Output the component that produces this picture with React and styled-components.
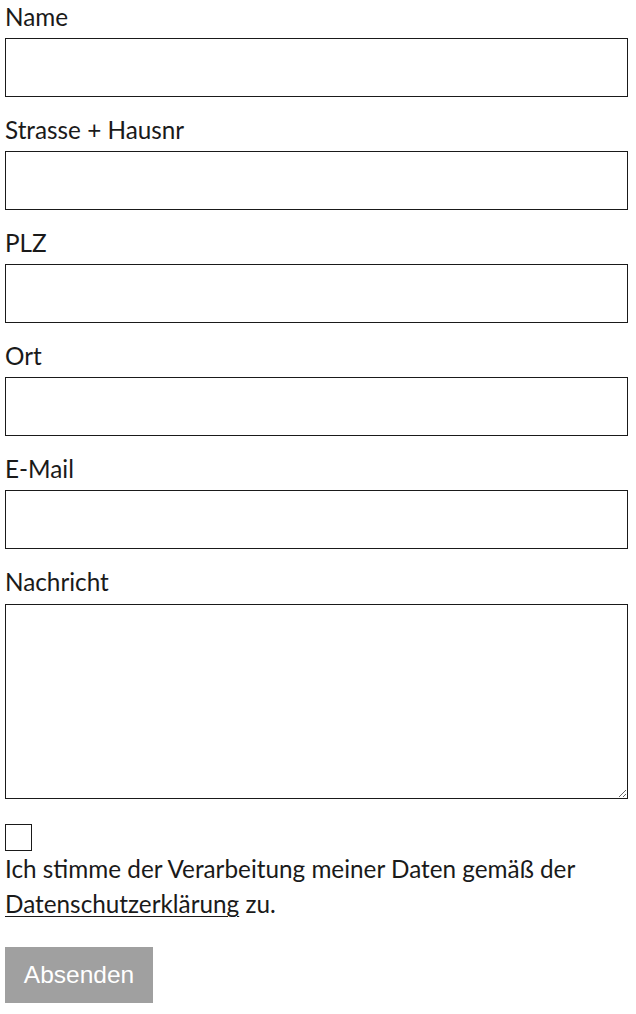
import React from "react";
import styled, { createGlobalStyle } from "styled-components";

const Global = createGlobalStyle`
  html, body { margin: 0; padding: 0; background: #fff; }
  body { font-family: Lato, "Open Sans", sans-serif; color: #1a1a1a; }
`;

const Form = styled.form`
  display: flex;
  flex-direction: column;
  padding: 0 8px 0 5px;
`;

const Field = styled.div`
  display: flex;
  flex-direction: column;
  margin-bottom: 16px;
`;

const Label = styled.label`
  font-size: 24.3px;
  line-height: 34px;
  margin-bottom: 4px;
  color: #1a1a1a;
`;

const Input = styled.input`
  box-sizing: border-box;
  width: 100%;
  height: 59px;
  border: 1px solid #1a1a1a;
  border-radius: 0;
  padding: 0 10px;
  font-family: inherit;
  font-size: 20px;
  background: #fff;
  outline: none;
`;

const TextArea = styled.textarea`
  box-sizing: border-box;
  width: 100%;
  height: 195px;
  margin-top: 1px;
  border: 1px solid #1a1a1a;
  border-radius: 0;
  padding: 10px;
  font-family: inherit;
  font-size: 20px;
  background: #fff;
  outline: none;
  display: block;
`;

const Consent = styled.div`
  display: flex;
  flex-direction: column;
  margin-top: 9px;
`;

const CheckBox = styled.span`
  box-sizing: border-box;
  display: block;
  width: 27px;
  height: 27px;
  border: 1px solid #1a1a1a;
  background: #fff;
`;

const ConsentText = styled.p`
  margin: 0;
  font-size: 24.3px;
  line-height: 35px;
  color: #1a1a1a;
`;

const Link = styled.a`
  color: #1a1a1a;
  text-decoration: underline;
  text-decoration-thickness: 1px;
  text-underline-offset: 3px;
`;

const Button = styled.button`
  align-self: flex-start;
  margin-top: 26px;
  width: 148px;
  height: 56px;
  padding: 0;
  border: none;
  border-radius: 0;
  background: #a0a0a0;
  color: #fff;
  font-family: "Liberation Sans", Arial, sans-serif;
  font-size: 24.5px;
  cursor: pointer;
`;

const fields = ["Name", "Strasse + Hausnr", "PLZ", "Ort", "E-Mail"];

export default function App() {
  return (
    <>
      <Global />
      <Form onSubmit={(e) => e.preventDefault()}>
        {fields.map((f) => (
          <Field key={f}>
            <Label>{f}</Label>
            <Input type="text" />
          </Field>
        ))}
        <Field>
          <Label>Nachricht</Label>
          <TextArea />
        </Field>
        <Consent>
          <CheckBox />
          <ConsentText>
            Ich stimme der Verarbeitung meiner Daten gemäß der{" "}
            <Link href="#">Datenschutzerklärung</Link> zu.
          </ConsentText>
        </Consent>
        <Button type="submit">Absenden</Button>
      </Form>
    </>
  );
}
